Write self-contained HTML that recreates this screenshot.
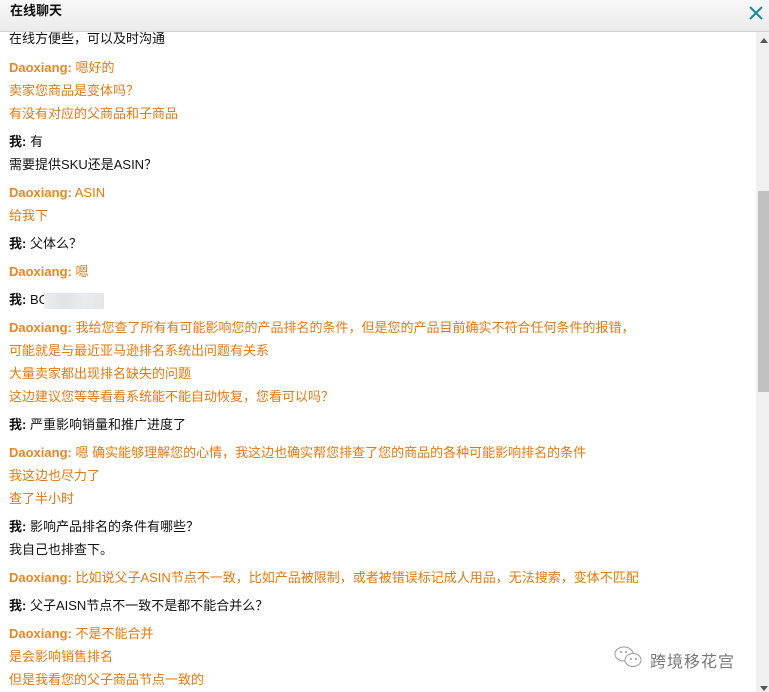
<!DOCTYPE html>
<html><head><meta charset="utf-8"><style>
*{margin:0;padding:0;box-sizing:border-box}
body{width:769px;height:692px;overflow:hidden;background:#fff;font-family:"Liberation Sans","Noto Sans CJK SC",sans-serif;font-size:13px;position:relative}
.hd{position:absolute;left:0;top:0;width:769px;height:32px;background:linear-gradient(#f8f8f8,#ebebeb);border-bottom:1px solid #d0d0d0}
.hd b{position:absolute;left:10px;top:2px;font-size:13px;color:#111;line-height:18px}
.x{position:absolute;left:748px;top:5px;width:16px;height:16px}
.l{position:absolute;left:9px;height:18px;line-height:18px;white-space:nowrap;color:#111}
.o{color:#e47911}
.n{font-weight:bold;color:#e47911;opacity:.9}
.m{font-weight:bold;color:#111}
.sb{position:absolute;left:756px;top:32px;width:13px;height:660px;background:#f0f0f0}
.th{position:absolute;left:758px;top:191px;width:11px;height:201px;background:#c1c1c1}
.blur{display:inline-block;width:60px;height:16px;vertical-align:middle;background:linear-gradient(90deg,#eceeee,#dfe3e3,#e8ecec,#e4e6e6);margin-left:-4px}
.wm{position:absolute;color:#777;font-size:16px;letter-spacing:1px}
</style></head><body>
<div class="hd"><b>在线聊天</b>
<svg class="x" viewBox="0 0 16 16"><path d="M2 2L14 14M14 2L2 14" stroke="#1a8a9a" stroke-width="2"/></svg></div>
<div class="l" style="top:30px">在线方便些，可以及时沟通</div>
<div class="l o" style="top:59px"><span class="n">Daoxiang:</span> 嗯好的</div>
<div class="l o" style="top:82px">卖家您商品是变体吗？</div>
<div class="l o" style="top:105px">有没有对应的父商品和子商品</div>
<div class="l" style="top:133px"><span class="m">我:</span> 有</div>
<div class="l" style="top:156px">需要提供SKU还是ASIN？</div>
<div class="l o" style="top:184px"><span class="n">Daoxiang:</span> ASIN</div>
<div class="l o" style="top:207px">给我下</div>
<div class="l" style="top:235px"><span class="m">我:</span> 父体么？</div>
<div class="l o" style="top:263px"><span class="n">Daoxiang:</span> 嗯</div>
<div class="l" style="top:291px"><span class="m">我:</span> BC<span class="blur"></span></div>
<div class="l o" style="top:319px"><span class="n">Daoxiang:</span> 我给您查了所有有可能影响您的产品排名的条件，但是您的产品目前确实不符合任何条件的报错，</div>
<div class="l o" style="top:342px">可能就是与最近亚马逊排名系统出问题有关系</div>
<div class="l o" style="top:365px">大量卖家都出现排名缺失的问题</div>
<div class="l o" style="top:388px">这边建议您等等看看系统能不能自动恢复，您看可以吗？</div>
<div class="l" style="top:416px"><span class="m">我:</span> 严重影响销量和推广进度了</div>
<div class="l o" style="top:444px"><span class="n">Daoxiang:</span> 嗯 确实能够理解您的心情，我这边也确实帮您排查了您的商品的各种可能影响排名的条件</div>
<div class="l o" style="top:467px">我这边也尽力了</div>
<div class="l o" style="top:490px">查了半小时</div>
<div class="l" style="top:518px"><span class="m">我:</span> 影响产品排名的条件有哪些？</div>
<div class="l" style="top:541px">我自己也排查下。</div>
<div class="l o" style="top:569px"><span class="n">Daoxiang:</span> 比如说父子ASIN节点不一致，比如产品被限制，或者被错误标记成人用品，无法搜索，变体不匹配</div>
<div class="l" style="top:597px"><span class="m">我:</span> 父子AISN节点不一致不是都不能合并么？</div>
<div class="l o" style="top:625px"><span class="n">Daoxiang:</span> 不是不能合并</div>
<div class="l o" style="top:648px">是会影响销售排名</div>
<div class="l o" style="top:671px">但是我看您的父子商品节点一致的</div>
<svg style="position:absolute;left:613px;top:645px" width="32" height="24" viewBox="0 0 32 24"><ellipse cx="11" cy="9" rx="9" ry="7" fill="none" stroke="#999" stroke-width="1"/><ellipse cx="20" cy="15" rx="8" ry="6.5" fill="#fff" stroke="#999" stroke-width="1"/><circle cx="8" cy="7" r="1" fill="#999"/><circle cx="13" cy="7" r="1" fill="#999"/><circle cx="18" cy="14" r="1" fill="#999"/><circle cx="23" cy="14" r="1" fill="#999"/></svg>
<div class="wm" style="left:650px;top:648px">跨境移花宫</div>
<div class="sb"></div><div class="th"></div>
<svg style="position:absolute;left:760px;top:38px" width="8" height="5"><path d="M0 5L4 0L8 5Z" fill="#555"/></svg>
<svg style="position:absolute;left:760px;top:686px" width="8" height="5"><path d="M0 0L4 5L8 0Z" fill="#555"/></svg>
</body></html>
